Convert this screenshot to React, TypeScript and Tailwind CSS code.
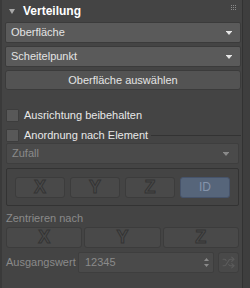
import React from "react";
import { Shuffle } from "lucide-react";

const font = { fontFamily: '"Liberation Sans", Arial, sans-serif' };

const Arrow = ({ color = "#e6e6e6" }: { color?: string }) => (
  <svg width="6" height="4" viewBox="0 0 6 4" className="shrink-0">
    <rect x="0" y="0" width="6" height="1" fill={color} />
    <polygon points="0.5,1 5.5,1 3,4" fill={color} />
  </svg>
);

const Dropdown = ({ label }: { label: string }) => (
  <div className="flex h-[21px] items-center justify-between rounded-[2px] border border-[#3b3b3b] bg-[#5a5a5a] pl-[5px] pr-[8px] text-[11px] text-[#e4e4e4]">
    <span>{label}</span>
    <Arrow />
  </div>
);

const Check = ({ label }: { label: string }) => (
  <div className="flex h-[13px] items-center gap-[5px] text-[11px] leading-[13px] text-[#e8e8e8]">
    <div className="h-[13px] w-[13px] rounded-[1px] border border-[#3d3d3d] bg-[#585858]" />
    <span>{label}</span>
  </div>
);

const AxisButton = ({ letter }: { letter: string }) => (
  <div className="flex h-[21px] items-center justify-center rounded-[3px] border border-[#3c3c3c] bg-[#494949] text-[18px] font-bold text-[#4a4a4a] [-webkit-text-stroke:1px_#343434]">
    {letter}
  </div>
);

export default function App() {
  return (
    <div className="flex h-[288px] w-[250px] overflow-hidden bg-[#3e3e3e]" style={font}>
      <div className="flex w-[243px] flex-col border-l-2 border-r border-l-[#3a3a3a] border-r-[#323232] bg-[#444444] pl-[3px] pr-[1px]">
        {/* Header */}
        <div className="flex h-[22px] items-center">
          <svg width="6" height="5" viewBox="0 0 6 5" className="ml-[4px] mr-[8px]">
            <polygon points="0,0 6,0 3,5" fill="#a8a8a8" />
          </svg>
          <span className="text-[12px] font-bold text-white">Verteilung</span>
          <svg width="6" height="6" viewBox="0 0 6 6" className="ml-auto mr-[4px] -mt-[6px]">
            {[0, 2, 4].map((x) =>
              [0, 2, 4].map((y) => <rect key={`${x}-${y}`} x={x} y={y} width="1" height="1" fill="#8a8a8a" />)
            )}
          </svg>
        </div>

        <div className="flex flex-col gap-[3px]">
          <Dropdown label="Oberfläche" />
          <Dropdown label="Scheitelpunkt" />
          <div className="flex h-[20px] items-center justify-center rounded-[3px] border border-[#3b3b3b] bg-[#535353] text-[11px] text-[#e4e4e4]">
            Oberfläche auswählen
          </div>
        </div>

        {/* Checkboxes */}
        <div className="mt-[19px] flex flex-col gap-[7px] pl-[1px]">
          <Check label="Ausrichtung beibehalten" />
          <div className="flex items-center gap-[3px]">
            <Check label="Anordnung nach Element" />
            <div className="h-px flex-1 bg-[#333]" />
          </div>
        </div>

        {/* Disabled group */}
        <div className="mt-[1px] flex flex-col pl-[1px] pr-[2px]">
          <div className="flex h-[21px] items-center justify-between rounded-[2px] border border-[#3e3e3e] bg-[#4a4a4a] pl-[5px] pr-[9px] text-[11px] text-[#8a8a8a]">
            <span>Zufall</span>
            <Arrow color="#8a8a8a" />
          </div>
          <div className="mt-[4px] grid h-[38px] grid-cols-4 items-center gap-[5px] rounded-[2px] border border-[#333] px-[8px]">
            <AxisButton letter="X" />
            <AxisButton letter="Y" />
            <AxisButton letter="Z" />
            <div className="flex h-[21px] items-center justify-center rounded-[3px] border border-[#46536a] bg-[#56657a] text-[12px] text-[#8594ab]">
              ID
            </div>
          </div>

          <div className="mt-[5px] text-[11px] leading-[14px] text-[#8a8a8a]">Zentrieren nach</div>
          <div className="mt-[2px] grid grid-cols-3 gap-[2px]">
            <AxisButton letter="X" />
            <AxisButton letter="Y" />
            <AxisButton letter="Z" />
          </div>

          <div className="mt-[4px] flex h-[21px] items-center">
            <span className="w-[72px] text-[11px] text-[#8a8a8a]">Ausgangswert</span>
            <div className="flex h-full flex-1 items-center justify-between rounded-[2px] border border-[#3e3e3e] bg-[#4a4a4a] pl-[6px] pr-[4px] text-[11px] text-[#8a8a8a]">
              <span>12345</span>
              <svg width="5" height="9" viewBox="0 0 5 9">
                <polygon points="2.5,0 5,3 0,3" fill="#8a8a8a" />
                <polygon points="0,6 5,6 2.5,9" fill="#8a8a8a" />
              </svg>
            </div>
            <div className="ml-[4px] flex h-full w-[21px] items-center justify-center rounded-[3px] border border-[#3e3e3e] bg-[#494949]">
              <Shuffle size={13} color="#5c5c5c" strokeWidth={2} />
            </div>
          </div>
        </div>
      </div>
    </div>
  );
}
